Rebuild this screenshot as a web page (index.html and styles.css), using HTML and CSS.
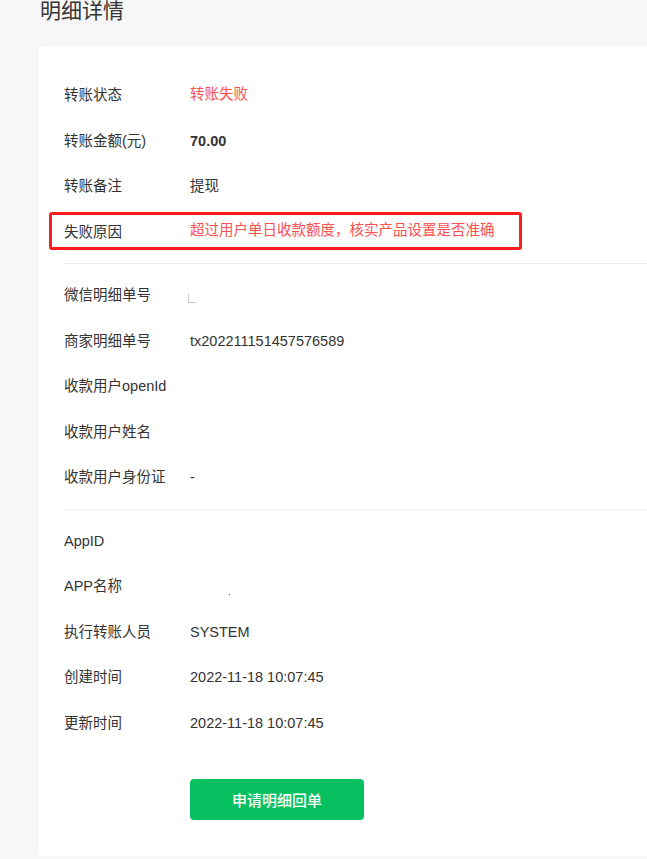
FILE: index.html
```html
<!DOCTYPE html>
<html lang="zh-CN">
<head>
<meta charset="utf-8">
<title>明细详情</title>
<link rel="stylesheet" href="styles.css">
</head>
<body>
<div class="page">
  <h2 class="page-title">明细详情</h2>
  <div class="card">
    <div class="section">
      <div class="row"><span class="label">转账状态</span><span class="value value-red value-lift">转账失败</span></div>
      <div class="row"><span class="label">转账金额(元)</span><span class="value value-bold">70.00</span></div>
      <div class="row"><span class="label">转账备注</span><span class="value">提现</span></div>
      <div class="row row-flagged"><span class="label">失败原因</span><span class="value value-red value-lift">超过用户单日收款额度，核实产品设置是否准确</span></div>
    </div>
    <div class="divider"></div>
    <div class="section">
      <div class="row"><span class="label">微信明细单号</span><span class="value"><svg class="mark-l" width="10" height="10" viewBox="0 0 10 10"><path d="M0.5 0 V8.5 H8" fill="none" stroke="#c8c8c8" stroke-width="1"/></svg></span></div>
      <div class="row"><span class="label">商家明细单号</span><span class="value">tx202211151457576589</span></div>
      <div class="row"><span class="label">收款用户openId</span><span class="value"></span></div>
      <div class="row"><span class="label">收款用户姓名</span><span class="value"></span></div>
      <div class="row"><span class="label">收款用户身份证</span><span class="value">-</span></div>
    </div>
    <div class="divider"></div>
    <div class="section">
      <div class="row"><span class="label">AppID</span><span class="value"></span></div>
      <div class="row"><span class="label">APP名称</span><span class="value"><span class="mark-dot"></span></span></div>
      <div class="row"><span class="label">执行转账人员</span><span class="value">SYSTEM</span></div>
      <div class="row"><span class="label">创建时间</span><span class="value">2022-11-18 10:07:45</span></div>
      <div class="row"><span class="label">更新时间</span><span class="value">2022-11-18 10:07:45</span></div>
    </div>
    <div class="actions">
      <button class="btn-primary" type="button">申请明细回单</button>
    </div>
  </div>
</div>
</body>
</html>
```

FILE: styles.css
```css
html, body {
  margin: 0;
  padding: 0;
  background: #f7f7f7;
  overflow: hidden;
}

body {
  font-family: "Liberation Sans", "Noto Sans CJK SC", sans-serif;
  font-size: 14.5px;
  color: #353535;
}

.page {
  padding-left: 39px;
}

.page-title {
  margin: 0;
  font-size: 21px;
  line-height: 22px;
  font-weight: normal;
  color: #353535;
  padding-left: 1px;
}

.card {
  margin-top: 24px;
  width: 640px;
  background: #ffffff;
  border-radius: 4px;
  padding: 27px 0 36px 25px;
  box-sizing: border-box;
}

.row {
  display: grid;
  grid-template-columns: 126px 1fr;
  align-items: center;
  height: 45.5px;
  line-height: 21.5px;
}

.row-flagged {
  position: relative;
}

.row-flagged::after {
  content: "";
  position: absolute;
  left: -15px;
  top: 2px;
  width: 473px;
  height: 38px;
  border: 3px solid #ff1c1c;
  border-radius: 3px;
  box-sizing: border-box;
}

.label {
  color: #333333;
  white-space: nowrap;
}

.value {
  color: #333333;
  white-space: nowrap;
}

.value-lift {
  position: relative;
  top: -1.5px;
}

.value-red {
  color: #fa5151;
}

.value-bold {
  font-weight: bold;
}

.divider {
  height: 1px;
  background: #ececec;
  margin: 8px 0 9px;
}

.mark-l {
  display: block;
  margin-left: -2px;
  margin-top: 6px;
}

.mark-dot {
  display: inline-block;
  width: 1px;
  height: 1px;
  background: #8a4a1a;
  margin-left: 39px;
  vertical-align: -4px;
}

.actions {
  margin-top: 33px;
  padding-left: 126px;
}

.btn-primary {
  display: block;
  width: 174px;
  height: 41px;
  border: none;
  border-radius: 4px;
  background: #07c160;
  color: #ffffff;
  font-family: "Liberation Sans", "Noto Sans CJK SC", sans-serif;
  font-size: 15px;
  font-weight: 500;
  padding: 0;
  cursor: pointer;
}
```
